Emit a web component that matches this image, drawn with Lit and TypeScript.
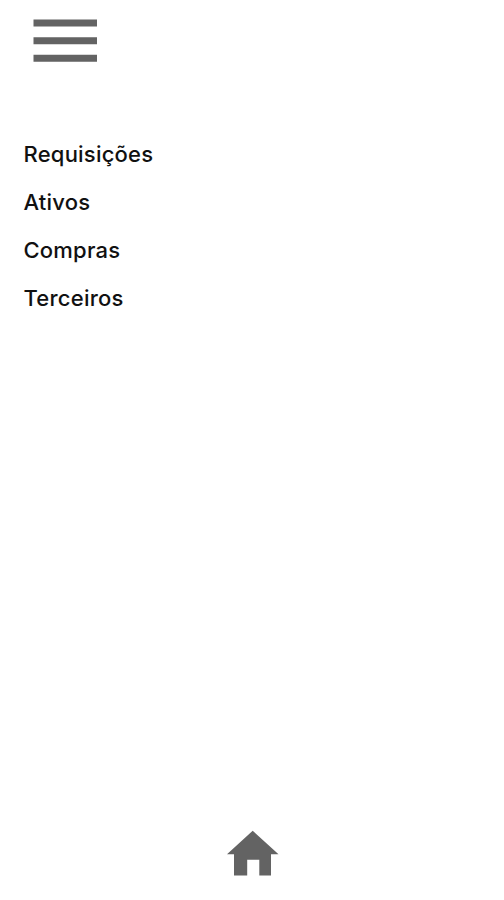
import { LitElement, html, css } from "lit";
import { customElement } from "lit/decorators.js";

@customElement("app-root")
export class AppRoot extends LitElement {
  static styles = css`
    :host {
      display: flex;
      flex-direction: column;
      box-sizing: border-box;
      height: 900px;
      background: #fff;
      color: #111;
      font-family: Inter, "Liberation Sans", sans-serif;
    }
    svg { display: block; fill: #636363; }
    header { height: 130px; box-sizing: border-box; padding: 19px 33px 0; }
    nav { flex: 1; padding-left: 23.5px; }
    .item {
      display: flex;
      align-items: center;
      height: 48.1px;
      font-size: 22px;
      font-weight: 500;
      letter-spacing: 0.22px;
      color: inherit;
      text-decoration: none;
    }
    footer { display: flex; justify-content: center; padding: 0 0 24px 2px; }
  `;

  private items = ["Requisições", "Ativos", "Compras", "Terceiros"];

  render() {
    return html`
      <header>
        <svg width="65" height="44" viewBox="0 0 65 44">
          <path d="M0.500 0.500h63.500v7H0.500zM0.500 18.200h63.500v7H0.500zM0.500 35.700h63.500v7H0.500z" />
        </svg>
      </header>
      <nav>
        ${this.items.map((t) => html`<a class="item"><span>${t}</span></a>`)}
      </nav>
      <footer>
        <svg width="52" height="46" viewBox="0 0 52 46">
          <path d="M25.700 0.700 51.500 24.300H44v21.200H32.300V29.700H20.200v15.800H7V24.300H0z" />
        </svg>
      </footer>
    `;
  }
}
